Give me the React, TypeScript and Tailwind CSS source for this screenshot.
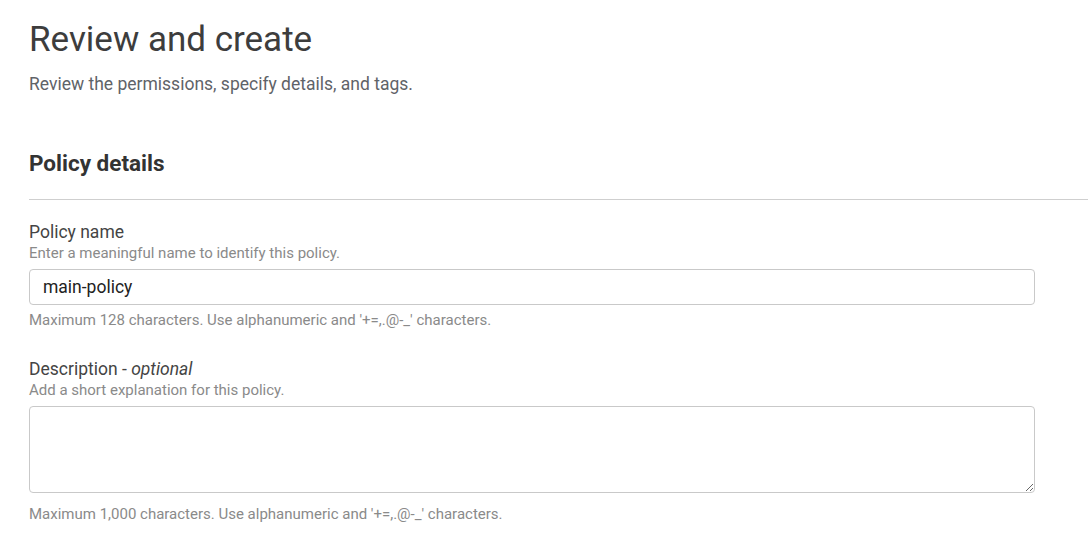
import React, { useState } from 'react';

const font = { fontFamily: 'Roboto, "Liberation Sans", Arial, sans-serif' };

const App: React.FC = () => {
  const [name, setName] = useState('main-policy');
  const [description, setDescription] = useState('');

  return (
    <div className="min-h-screen w-full bg-white text-[#333]" style={font}>
      {/* Page header */}
      <div className="pl-[29px] pt-[18px]">
        <h1 className="text-[35px] leading-[44px] font-normal text-[#3d3d3d]">Review and create</h1>
        <p className="mt-[10px] text-[17.5px] leading-[24px] text-[#5f6368]">
          Review the permissions, specify details, and tags.
        </p>
      </div>

      {/* Section */}
      <div className="mt-[53px] pl-[29px]">
        <h2 className="text-[22.5px] leading-[28px] font-bold text-[#333]">Policy details</h2>
        <div className="mt-[22px] h-px bg-[#cfcfcf]" />

        <div className="w-[1006px]">
          {/* Policy name */}
          <div className="mt-[21px]">
            <label className="block text-[17.5px] leading-[22px] text-[#444]">Policy name</label>
            <div className="text-[15px] leading-[20px] text-[#8a8a8a]">
              Enter a meaningful name to identify this policy.
            </div>
            <input
              value={name}
              onChange={(e) => setName(e.target.value)}
              className="mt-[6px] block h-[36px] w-full rounded-[4px] border border-[#c9c9c9] px-[13px] text-[17.5px] text-[#222] outline-none"
            />
            <div className="mt-[5px] text-[15px] leading-[20px] text-[#8a8a8a]">
              Maximum 128 characters. Use alphanumeric and '+=,.@-_' characters.
            </div>
          </div>

          {/* Description */}
          <div className="mt-[28px]">
            <label className="block text-[17.5px] leading-[22px] text-[#444]">
              Description - <i>optional</i>
            </label>
            <div className="text-[15px] leading-[20px] text-[#8a8a8a]">Add a short explanation for this policy.</div>
            <textarea
              value={description}
              onChange={(e) => setDescription(e.target.value)}
              className="mt-[6px] block h-[87px] w-full resize-y rounded-[4px] border border-[#c9c9c9] px-[13px] py-[8px] text-[17.5px] text-[#222] outline-none"
            />
            <div className="mt-[11px] text-[15px] leading-[20px] text-[#8a8a8a]">
              Maximum 1,000 characters. Use alphanumeric and '+=,.@-_' characters.
            </div>
          </div>
        </div>
      </div>
    </div>
  );
};

export default App;
